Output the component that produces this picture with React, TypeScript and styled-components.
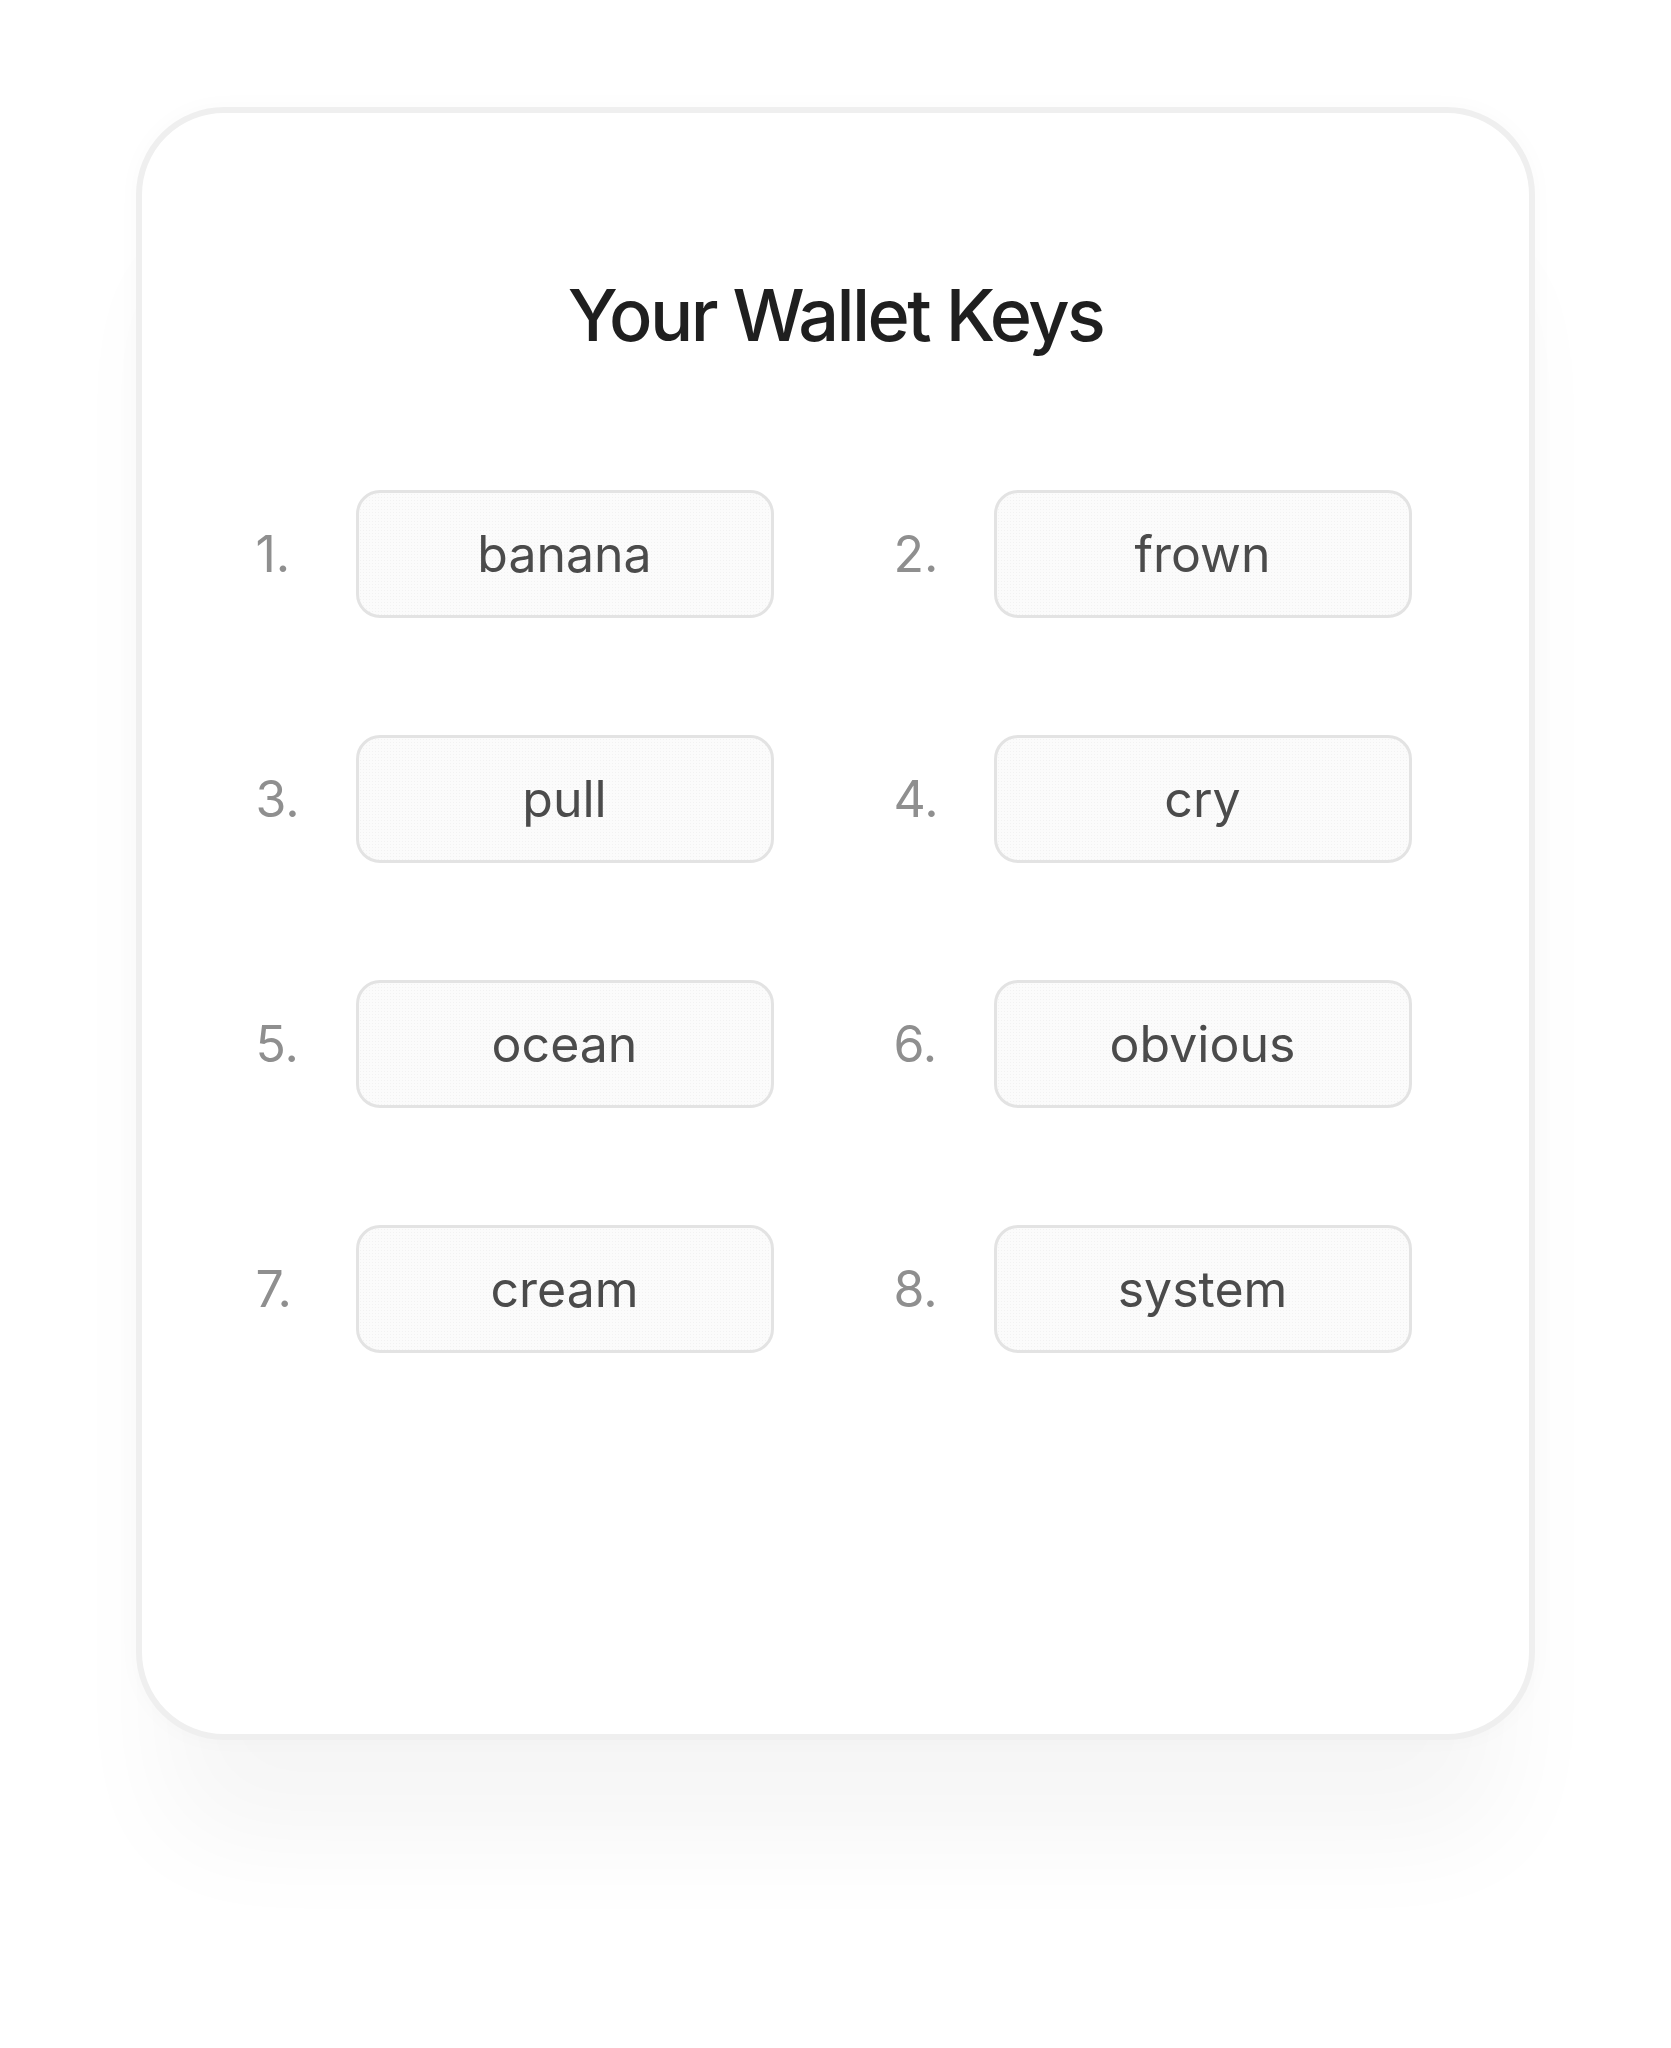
import React from 'react'
import styled, { createGlobalStyle } from 'styled-components'

const GlobalStyle = createGlobalStyle`
  html, body {
    margin: 0;
    padding: 0;
    background: #ffffff;
  }
  body {
    font-family: Inter, "Noto Sans", "Liberation Sans", sans-serif;
    -webkit-font-smoothing: antialiased;
  }
`

const Page = styled.div`
  width: 1671px;
  min-height: 2048px;
  padding-top: 107px;
  box-sizing: border-box;
`

const Card = styled.section`
  width: 1399px;
  height: 1633px;
  margin: 0 auto;
  box-sizing: border-box;
  border: 6px solid #efefef;
  border-radius: 88px;
  background: #ffffff;
  box-shadow:
    0 130px 110px -30px rgba(0, 0, 0, 0.04),
    0 0 24px rgba(0, 0, 0, 0.025);
  padding-top: 166px;
  display: flex;
  flex-direction: column;
  align-items: center;
`

const Title = styled.h1`
  margin: 0;
  font-size: 72px;
  line-height: 1;
  font-weight: 500;
  color: #1f1f1f;
  letter-spacing: -2.6px;
`

const KeyGrid = styled.ol`
  list-style: none;
  margin: 139px 4px 0 0;
  padding: 0;
  display: grid;
  grid-template-columns: repeat(2, 518px);
  column-gap: 120px;
  row-gap: 117px;
`

const KeyItem = styled.li`
  display: flex;
  align-items: center;
`

const Index = styled.span`
  width: 100px;
  flex: none;
  font-size: 50px;
  line-height: 1;
  color: #8f8f8f;
`

const Word = styled.div`
  width: 418px;
  height: 128px;
  box-sizing: border-box;
  border: 3px solid #e3e3e3;
  border-radius: 24px;
  background-color: #fbfbfb;
  background-image: radial-gradient(#f2f2f2 0.5px, transparent 0.7px);
  background-size: 3px 3px;
  display: flex;
  align-items: center;
  justify-content: center;
  font-size: 50px;
  line-height: 1;
  color: #4b4b4b;
`

const words = ['banana', 'frown', 'pull', 'cry', 'ocean', 'obvious', 'cream', 'system']

export default function App() {
  return (
    <>
      <GlobalStyle />
      <Page>
        <Card>
          <Title>Your Wallet Keys</Title>
          <KeyGrid>
            {words.map((word, i) => (
              <KeyItem key={word}>
                <Index>{i + 1}.</Index>
                <Word>{word}</Word>
              </KeyItem>
            ))}
          </KeyGrid>
        </Card>
      </Page>
    </>
  )
}
